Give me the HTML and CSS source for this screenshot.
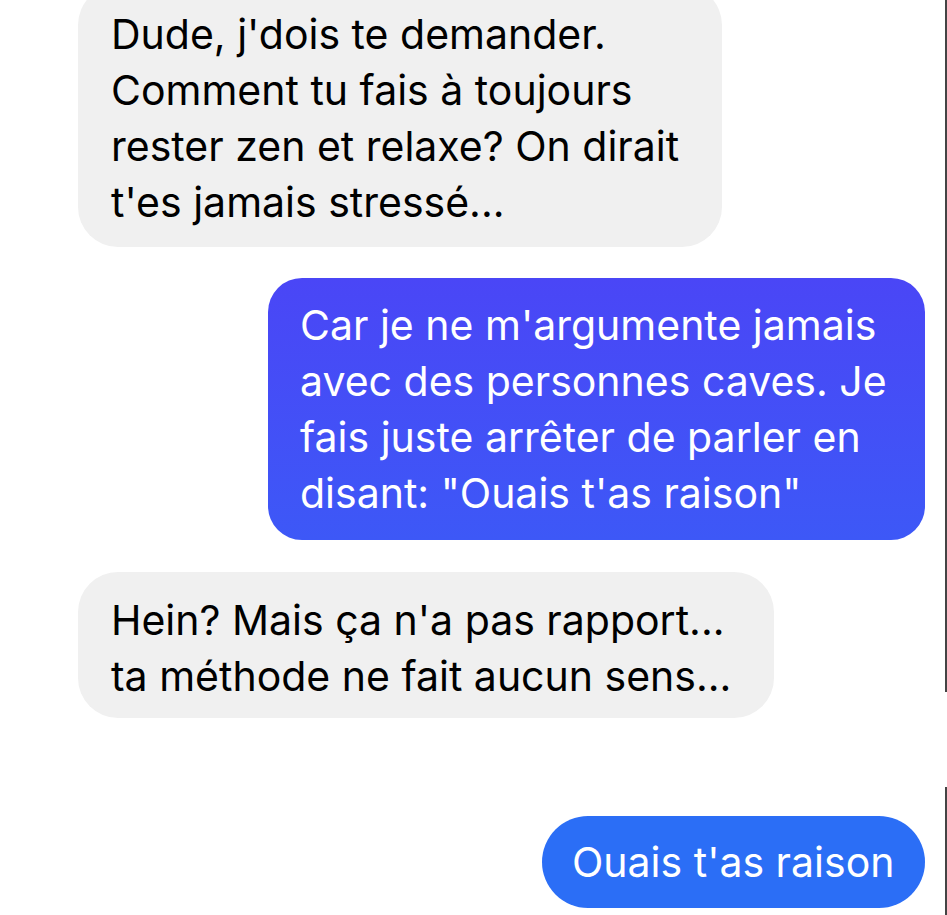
FILE: index.html
```html
<!DOCTYPE html>
<html lang="fr">
<head>
<meta charset="utf-8">
<title>Conversation</title>
<link rel="stylesheet" href="styles.css">
</head>
<body>
<div class="frame">
  <div class="chat">
    <div class="bubble in b1">Dude, j'dois te demander.<br>Comment tu fais à toujours<br>rester zen et relaxe? On dirait<br>t'es jamais stressé...</div>
    <div class="bubble out b2">Car je ne m'argumente jamais<br>avec des personnes caves. Je<br>fais juste arrêter de parler en<br>disant: "Ouais t'as raison"</div>
    <div class="bubble in b3">Hein? Mais ça n'a pas rapport...<br>ta méthode ne fait aucun sens...</div>
    <div class="bubble out b4">Ouais t'as raison</div>
  </div>
  <div class="edge edge-top"></div>
  <div class="edge edge-bottom"></div>
</div>
</body>
</html>
```
FILE: styles.css
```css
html, body {
  margin: 0;
  padding: 0;
  background: #ffffff;
}
body {
  font-family: "Inter", "Roboto", "Liberation Sans", sans-serif;
  overflow: hidden;
}
.frame {
  position: relative;
  width: 947px;
  height: 915px;
  overflow: hidden;
}
.chat {
  display: flex;
  flex-direction: column;
  padding: 0 22px 0 78px;
}
.bubble {
  box-sizing: border-box;
  font-size: 41px;
  line-height: 56px;
  white-space: nowrap;
}
.in {
  align-self: flex-start;
  background: #f0f0f0;
  color: #000;
}
.out {
  align-self: flex-end;
  color: #fff;
}
.b1 {
  width: 644px;
  margin-top: -15px;
  padding: 21px 33px 17px;
  border-radius: 40px;
}
.b2 {
  width: 657px;
  margin-top: 31px;
  padding: 19px 32px;
  border-radius: 34px;
  background: linear-gradient(180deg, #4a46f6 0%, #3d58f7 100%);
}
.b3 {
  width: 696px;
  margin-top: 32px;
  padding: 20px 33px 14px;
  border-radius: 40px;
}
.b4 {
  width: 383px;
  margin-top: 98px;
  padding: 18px 30px;
  border-radius: 46px;
  background: #2b6ef6;
}
.edge {
  position: absolute;
  right: 0;
  width: 2px;
  background: #444;
}
.edge-top {
  top: 0;
  height: 692px;
}
.edge-bottom {
  top: 787px;
  bottom: 0;
}
```
